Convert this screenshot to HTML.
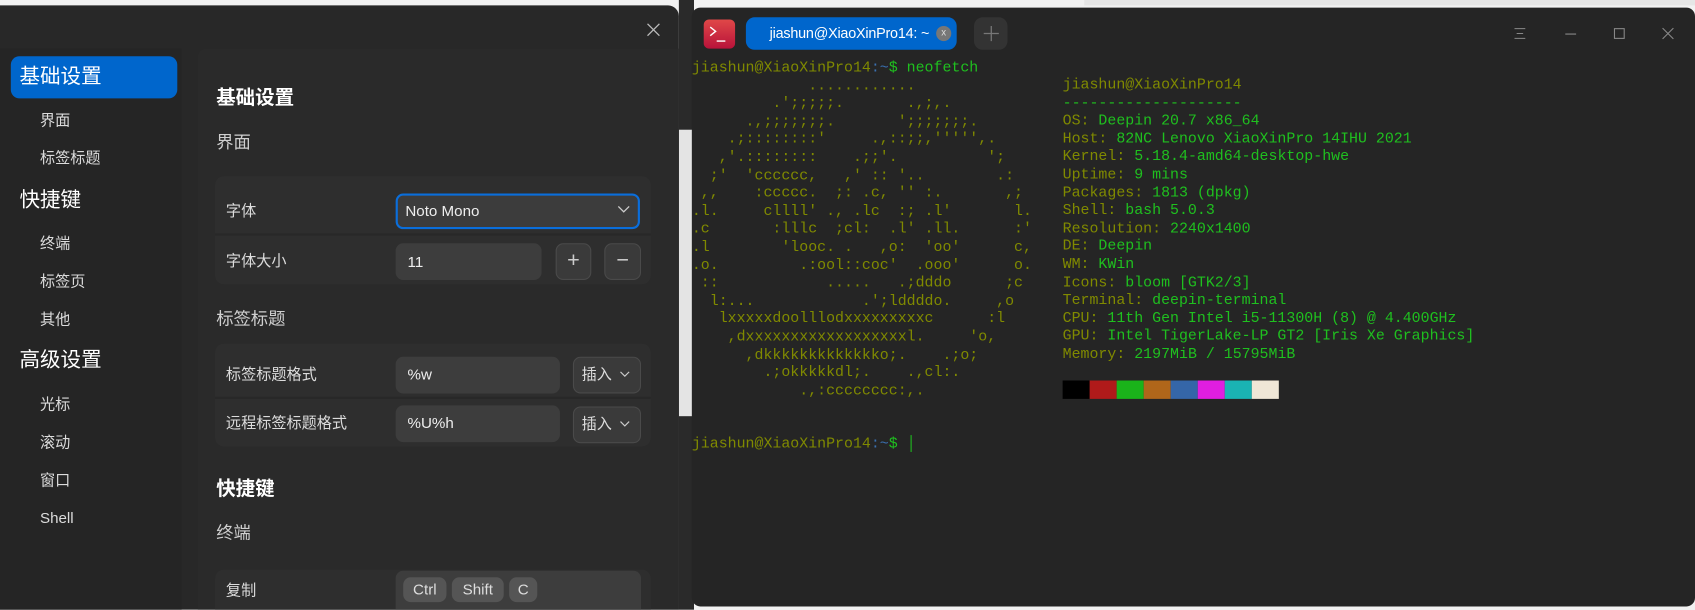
<!DOCTYPE html>
<html><head><meta charset="utf-8"><style>
html,body{margin:0;padding:0;width:1695px;height:610px;overflow:hidden;background:#f2f2f2}
#w{position:absolute;left:0;top:0;width:1568px;height:564px;transform:scale(1.081);transform-origin:0 0;font-family:"Liberation Sans","Noto Sans CJK SC",sans-serif}
.a{position:absolute}
.set{left:0;top:5px;width:628px;height:559px;background:#282828;border-top-right-radius:10px}
.side{left:0;top:45px;width:168px;height:519px;background:#252525}
.cont{left:183px;top:45px;width:445px;height:519px;background:#2a2a2a;border-top-left-radius:8px}
.t{position:absolute;color:#dcdcdc;white-space:nowrap;line-height:1}
.s14{font-size:14px}.h19{font-size:19px;color:#fff}.h18{font-size:18px;color:#fff;font-weight:bold}.h16{font-size:16px;color:#cfcfcf}
.grp{position:absolute;background:#2e2e2e;border-radius:8px;left:199px;width:403px}
.inp{position:absolute;background:#3d3d3d;border-radius:7px}
.btn{position:absolute;background:#3a3a3a;border:1px solid #4a4a4a;border-radius:7px;color:#ccc;text-align:center}
.key{position:absolute;background:#555;border-radius:7px;color:#ddd;font-size:14px;text-align:center;line-height:23px;top:534px;height:23px}
.term{left:640px;top:7px;width:928px;height:554px;background:#252525;border-radius:8px;overflow:hidden}
pre{margin:0;font-family:"Liberation Mono",monospace;font-size:13.8px;line-height:16.6px;position:absolute}
.o{color:#808a00}.g{color:#1fc01f}.b{color:#3a70b0}
svg{position:absolute}
</style></head><body>
<div id="w">
<div class="a" style="left:628px;top:0;width:14px;height:564px;background:#2a2a2a"></div>
<div class="a" style="left:628px;top:120px;width:14px;height:265px;background:#e4e4e4"></div>
<div class="a" style="left:1003px;top:0;width:565px;height:5px;background:#e6e6e6"></div>
<div class="a set"></div>
<svg style="left:598px;top:21px" width="13" height="13"><path d="M1 1L12 12M12 1L1 12" stroke="#bbb" stroke-width="1.2"/></svg>
<div class="a side"></div>
<div class="a cont"></div>
<div class="a" style="left:10px;top:52px;width:154px;height:39px;background:#0066cc;border-radius:8px"></div>
<div class="t h19" style="left:18px;top:62px">基础设置</div>
<div class="t s14" style="left:37px;top:104px">界面</div>
<div class="t s14" style="left:37px;top:139px">标签标题</div>
<div class="t h19" style="left:18px;top:176px">快捷键</div>
<div class="t s14" style="left:37px;top:218px">终端</div>
<div class="t s14" style="left:37px;top:253px">标签页</div>
<div class="t s14" style="left:37px;top:288px">其他</div>
<div class="t h19" style="left:18px;top:324px">高级设置</div>
<div class="t s14" style="left:37px;top:367px">光标</div>
<div class="t s14" style="left:37px;top:402px">滚动</div>
<div class="t s14" style="left:37px;top:437px">窗口</div>
<div class="t s14" style="left:37px;top:472px">Shell</div>

<div class="t h18" style="left:200px;top:81px">基础设置</div>
<div class="t h16" style="left:200px;top:125px">界面</div>
<div class="grp" style="top:163px;height:100px"></div>
<div class="a" style="left:199px;top:216px;width:403px;height:2px;background:#282828"></div>
<div class="t s14" style="left:209px;top:188px">字体</div>
<div class="inp" style="left:366px;top:179px;width:222px;height:29px;border:2px solid #0a6edb;background:#3c3c3c"></div>
<div class="t s14" style="left:375px;top:188px;color:#eee">Noto Mono</div>
<svg style="left:571px;top:190px" width="12" height="8"><path d="M1 1L6 6L11 1" stroke="#ccc" stroke-width="1.2" fill="none"/></svg>
<div class="t s14" style="left:209px;top:234px">字体大小</div>
<div class="inp" style="left:366px;top:225px;width:135px;height:34px"></div>
<div class="t s14" style="left:377px;top:235px;color:#eee">11</div>
<div class="btn" style="left:514px;top:225px;width:31px;height:32px;line-height:31px;font-size:20px">+</div>
<div class="btn" style="left:559px;top:225px;width:32px;height:32px;line-height:31px;font-size:20px">−</div>

<div class="t h16" style="left:200px;top:288px">标签标题</div>
<div class="grp" style="top:318px;height:95px"></div>
<div class="a" style="left:199px;top:367px;width:403px;height:2px;background:#282828"></div>
<div class="t s14" style="left:209px;top:339px">标签标题格式</div>
<div class="inp" style="left:366px;top:330px;width:152px;height:34px"></div>
<div class="t s14" style="left:377px;top:339px;color:#eee">%w</div>
<div class="btn" style="left:530px;top:330px;width:61px;height:32px"></div>
<div class="t s14" style="left:538px;top:339px;color:#ddd">插入</div>
<svg style="left:573px;top:343px" width="10" height="7"><path d="M1 1L5 5L9 1" stroke="#ccc" stroke-width="1.1" fill="none"/></svg>
<div class="t s14" style="left:209px;top:384px">远程标签标题格式</div>
<div class="inp" style="left:366px;top:375px;width:152px;height:34px"></div>
<div class="t s14" style="left:377px;top:384px;color:#eee">%U%h</div>
<div class="btn" style="left:530px;top:376px;width:61px;height:32px"></div>
<div class="t s14" style="left:538px;top:385px;color:#ddd">插入</div>
<svg style="left:573px;top:389px" width="10" height="7"><path d="M1 1L5 5L9 1" stroke="#ccc" stroke-width="1.1" fill="none"/></svg>

<div class="t h18" style="left:200px;top:443px">快捷键</div>
<div class="t h16" style="left:200px;top:486px">终端</div>
<div class="grp" style="top:527px;height:37px;border-radius:8px 8px 0 0"></div>
<div class="t s14" style="left:209px;top:539px">复制</div>
<div class="inp" style="left:366px;top:528px;width:227px;height:36px;border-radius:7px 7px 0 0"></div>
<div class="key" style="left:373px;width:40px">Ctrl</div>
<div class="key" style="left:418px;width:48px">Shift</div>
<div class="key" style="left:471px;width:26px">C</div>

<div class="a term"></div>
<div class="a" style="left:651px;top:18px;width:29px;height:27px;border-radius:5px;background:linear-gradient(#e04848,#b8123a)"></div>
<svg style="left:656px;top:24px" width="18" height="16"><path d="M1 1L6 5L1 9M7 14H15" stroke="#fff" stroke-width="1.3" fill="none"/></svg>
<div class="a" style="left:690px;top:16px;width:195px;height:30px;background:#0066cc;border-radius:8px"></div>
<div class="t" style="left:712px;top:24px;color:#fff;font-size:13.3px;letter-spacing:-0.2px">jiashun@XiaoXinPro14: ~</div>
<div class="a" style="left:866px;top:24px;width:14px;height:14px;border-radius:7px;background:#777;color:#ddd;font-size:9px;text-align:center;line-height:13px">x</div>
<div class="a" style="left:901px;top:16px;width:31px;height:30px;background:#333;border-radius:8px"></div>
<svg style="left:909px;top:23px" width="16" height="16"><path d="M8 1V15M1 8H15" stroke="#777" stroke-width="1.2"/></svg>
<svg style="left:1400px;top:25px" width="12" height="12"><path d="M1 1.5H11M3 6H9M1 10.5H11" stroke="#888" stroke-width="1"/></svg>
<svg style="left:1447px;top:25px" width="12" height="12"><path d="M1 6.5H11" stroke="#888" stroke-width="1"/></svg>
<svg style="left:1492px;top:25px" width="12" height="12"><rect x="1.5" y="1.5" width="9" height="9" stroke="#888" fill="none"/></svg>
<svg style="left:1537px;top:25px" width="12" height="12"><path d="M1 1L11 11M11 1L1 11" stroke="#888" stroke-width="1"/></svg>

<pre style="left:640px;top:56px"><span class="o">jiashun@XiaoXinPro14</span><span class="b">:~</span><span class="g">$ neofetch</span>
<span class="o">             ............
         .';;;;;.       .,;,.
      .,;;;;;;;.       ';;;;;;;.
    .;::::::::'     .,::;;,''''',.
   ,'.::::::::    .;;'.          ';
  ;'  'cccccc,   ,' :: '..        .:
 ,,    :ccccc.  ;: .c, '' :.       ,;
.l.     cllll' ., .lc  :; .l'       l.
.c       :lllc  ;cl:  .l' .ll.      :'
.l        'looc. .   ,o:  'oo'      c,
.o.         .:ool::coc'  .ooo'      o.
 ::            .....   .;dddo      ;c
  l:...            .';lddddo.     ,o
   lxxxxxdoolllodxxxxxxxxxc      :l
    ,dxxxxxxxxxxxxxxxxxxl.     'o,
      ,dkkkkkkkkkkkkko;.    .;o;
        .;okkkkkdl;.    .,cl:.
            .,:cccccccc:,.</span>


<span class="o">jiashun@XiaoXinPro14</span><span class="b">:~</span><span class="g">$ </span><span style="color:#1fc01f">│</span></pre>
<pre style="left:983px;top:72px"><span class="o">jiashun@XiaoXinPro14</span>
<span class="g">--------------------</span>
<span class="o">OS:</span><span class="g"> Deepin 20.7 x86_64</span>
<span class="o">Host:</span><span class="g"> 82NC Lenovo XiaoXinPro 14IHU 2021</span>
<span class="o">Kernel:</span><span class="g"> 5.18.4-amd64-desktop-hwe</span>
<span class="o">Uptime:</span><span class="g"> 9 mins</span>
<span class="o">Packages:</span><span class="g"> 1813 (dpkg)</span>
<span class="o">Shell:</span><span class="g"> bash 5.0.3</span>
<span class="o">Resolution:</span><span class="g"> 2240x1400</span>
<span class="o">DE:</span><span class="g"> Deepin</span>
<span class="o">WM:</span><span class="g"> KWin</span>
<span class="o">Icons:</span><span class="g"> bloom [GTK2/3]</span>
<span class="o">Terminal:</span><span class="g"> deepin-terminal</span>
<span class="o">CPU:</span><span class="g"> 11th Gen Intel i5-11300H (8) @ 4.400GHz</span>
<span class="o">GPU:</span><span class="g"> Intel TigerLake-LP GT2 [Iris Xe Graphics]</span>
<span class="o">Memory:</span><span class="g"> 2197MiB / 15795MiB</span></pre>
<div class="a" style="left:983px;top:352px;height:17px;width:200px;display:flex">
<div style="flex:1;background:#000"></div><div style="flex:1;background:#b01a1a"></div><div style="flex:1;background:#1ab31a"></div><div style="flex:1;background:#b0661a"></div><div style="flex:1;background:#3566a8"></div><div style="flex:1;background:#e01ee0"></div><div style="flex:1;background:#1ab3b3"></div><div style="flex:1;background:#efe6d6"></div>
</div>
</div>
</body></html>
